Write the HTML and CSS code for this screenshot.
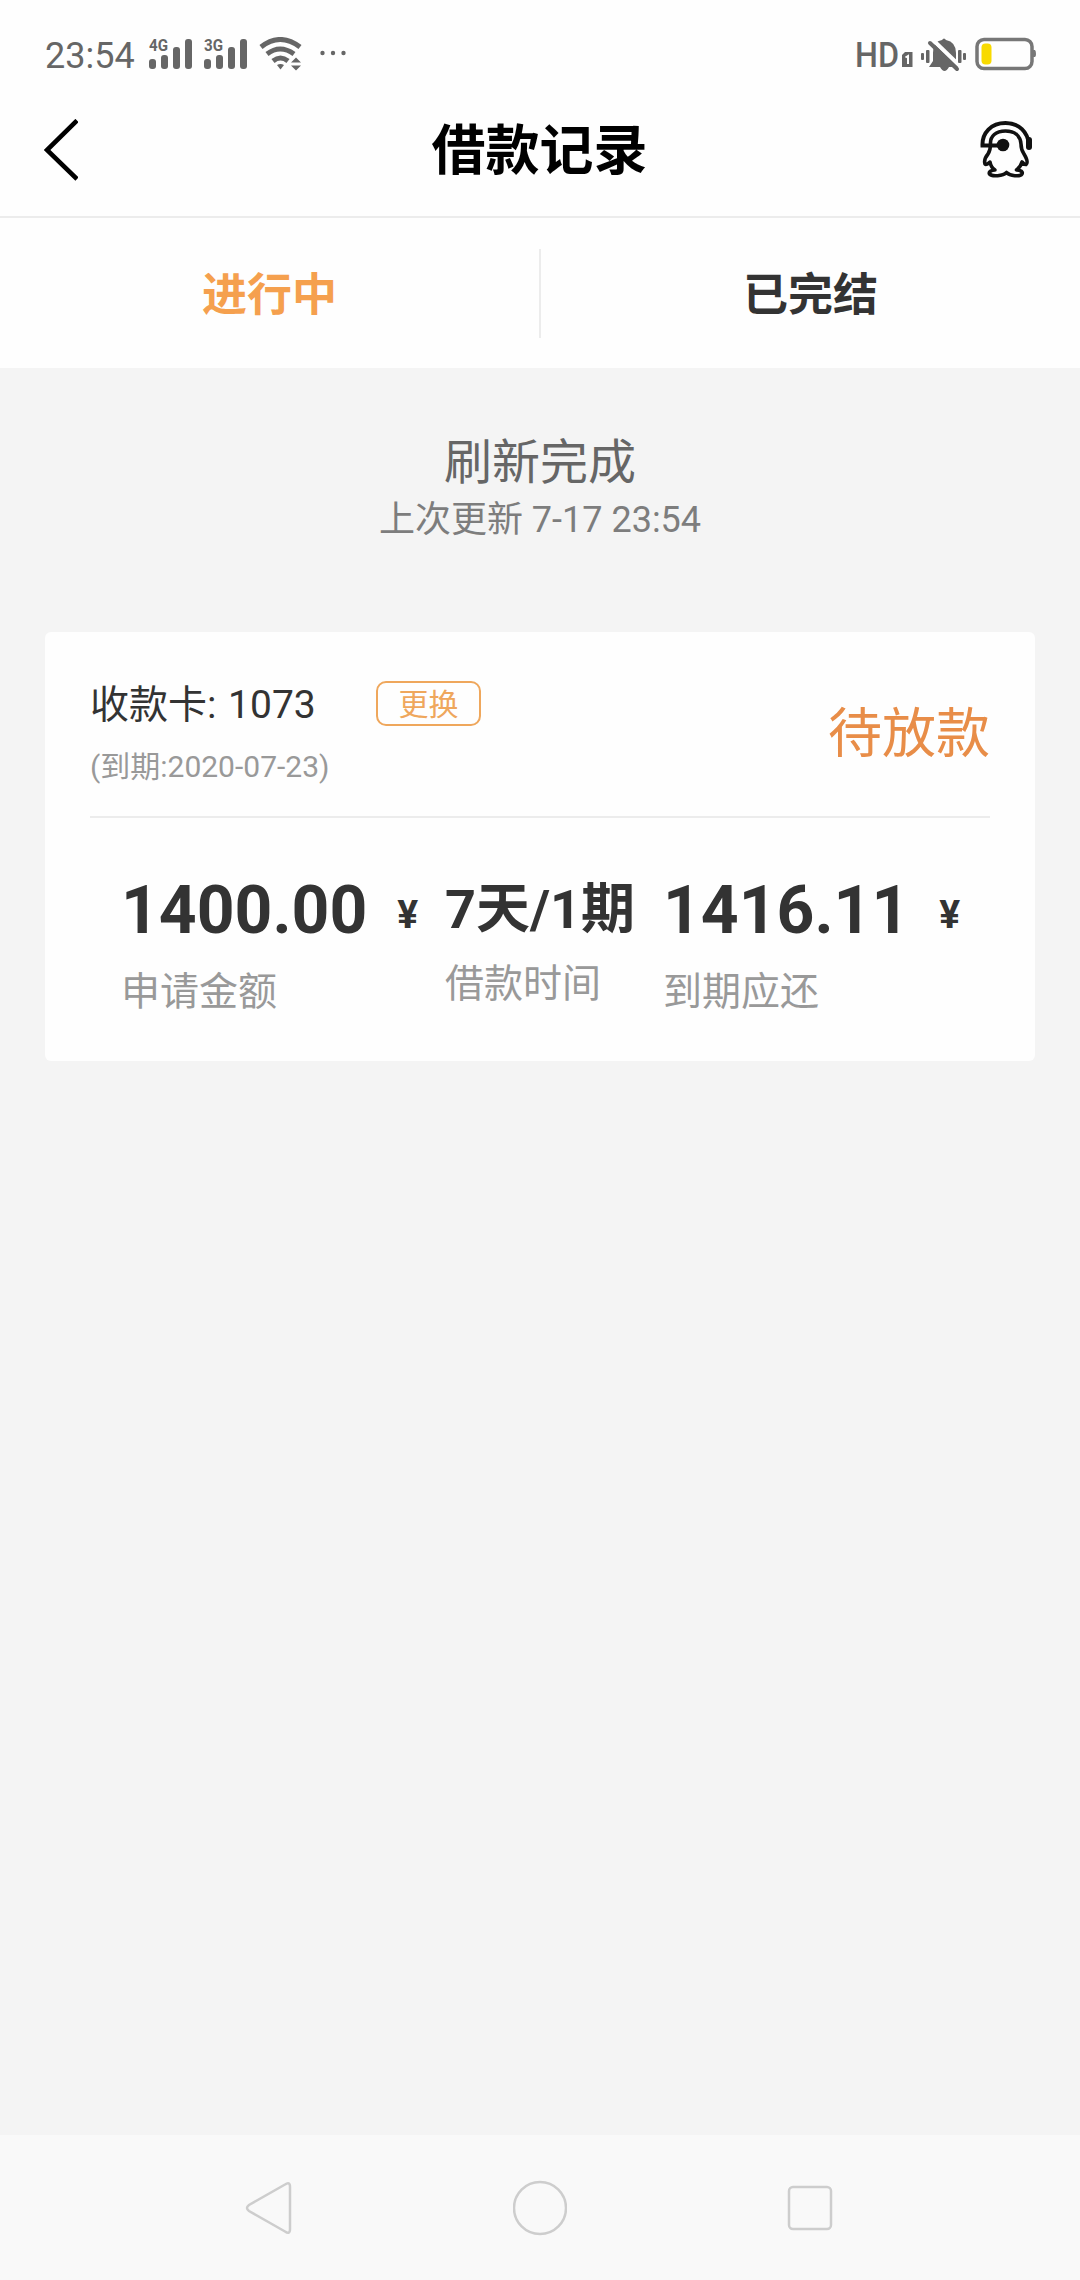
FILE: index.html
```html
<!DOCTYPE html>
<html lang="zh-CN">
<head>
    <meta charset="UTF-8">
    <meta name="viewport" content="width=device-width, initial-scale=1.0">
    <title>借款记录</title>
    <link rel="stylesheet" href="styles.css">
</head>
<body>
    <div class="status-bar">
        <div class="status-left">
            <span class="time">23:54</span>
            <svg class="signal" width="46" height="38" viewBox="0 -4 46 38">
                <text x="1" y="14" textLength="19" lengthAdjust="spacingAndGlyphs">4G</text>
                <rect x="1" y="22" width="7" height="10" rx="3"/>
                <rect x="13" y="18" width="7" height="14" rx="3"/>
                <rect x="25" y="10" width="7" height="22" rx="3"/>
                <rect x="37" y="2" width="7" height="30" rx="3"/>
            </svg>
            <svg class="signal signal-second" width="46" height="38" viewBox="0 -4 46 38">
                <text x="1" y="14" textLength="19" lengthAdjust="spacingAndGlyphs">3G</text>
                <rect x="1" y="22" width="7" height="10" rx="3"/>
                <rect x="13" y="18" width="7" height="14" rx="3"/>
                <rect x="25" y="10" width="7" height="22" rx="3"/>
                <rect x="37" y="2" width="7" height="30" rx="3"/>
            </svg>
            <svg class="wifi" width="44" height="34" viewBox="0 0 44 34">
                <g fill="none" stroke="#666" stroke-width="5">
                    <path d="M2 10Q21 -5 41 10"/>
                    <path d="M8 17Q21 7 35 17"/>
                    <path d="M14 24Q21.500 18 29 24"/>
                </g>
                <path d="M18 28Q21.500 26 25 28L21.500 32.500Z" fill="#666"/>
                <path d="M32 25.500L37 20.500L42 25.500ZM32 28.500L37 33.500L42 28.500Z" fill="#666"/>
            </svg>
            <svg class="more" width="26" height="6" viewBox="0 0 26 6" fill="#666">
                <circle cx="2.500" cy="3" r="2.200"/>
                <circle cx="13" cy="3" r="2.200"/>
                <circle cx="23.500" cy="3" r="2.200"/>
            </svg>
        </div>
        <div class="status-right">
            <svg class="hd" width="60" height="44" viewBox="-2 -6 60 44">
                <text x="-2" y="30" textLength="44" lengthAdjust="spacingAndGlyphs">HD</text>
                <path d="M48 15H55.500V30H45V18Z"/>
                <path d="M48.500 20.500L51 19V27" fill="none" stroke="#fff" stroke-width="2"/>
            </svg>
            <svg class="bell" width="48" height="36" viewBox="0 0 48 36" fill="#666">
                <path d="M9 30L13 24V16Q13 4 22 3Q24 0 26 3Q36 5 36 16V24L39 30H29Q24.500 38 20 30Z"/>
                <path d="M14 4L42 31" stroke="#fefefe" stroke-width="4"/>
                <path d="M10 6L37 32" stroke="#666" stroke-width="4" stroke-linecap="round"/>
                <rect x="1" y="16" width="3" height="7" rx="1"/>
                <rect x="6" y="13" width="3.500" height="13" rx="1"/>
                <rect x="38" y="13" width="3.500" height="13" rx="1"/>
                <rect x="43" y="16" width="3" height="7" rx="1"/>
            </svg>
            <svg class="battery" width="62" height="34" viewBox="0 0 62 34">
                <rect x="2" y="2.500" width="55" height="29" rx="7" fill="none" stroke="#777" stroke-width="3.500"/>
                <path d="M58 13H60Q61 14 61 17T60 20H58Z" fill="#777"/>
                <rect x="6.500" y="6.500" width="10" height="21" rx="4" fill="#f8da00"/>
            </svg>
        </div>
    </div>

    <div class="header">
        <svg class="back" width="34" height="62" viewBox="0 0 34 62">
            <path d="M33 1.500L3 31L33 60" fill="none" stroke="#000" stroke-width="4.600"/>
        </svg>
        <h1>借款记录</h1>
        <svg class="service" width="56" height="60" viewBox="0 0 56 60" fill="none" stroke="#111" stroke-width="4">
            <path d="M21 26.500H3.500C3 14 12 4 26.500 4C40 4 49 13 50 26" />
            <path d="M50 21V28" stroke-width="6" stroke-linecap="round"/>
            <circle cx="24" cy="26" r="6.300" fill="#111" stroke="none"/>
            <path d="M11.500 25C11 17 17 12 26.500 12C36 12 41.500 17 42 25C42 29 43 32 45 35C48 40 49 44 47 45.500C45.500 46 44.500 44 43 43C42 47 40 49 37.500 51C42 51 44 53 43 55C41 58 31 57 27.500 53.500C24 57 13 58 10.500 55C9.500 53 12 51 16 51C13 49 11.500 46 11 43C9 45 7 46 6 45C5 42 6.500 38 9 35C11 32 11.500 29 11.500 25" stroke-width="3.600" stroke-linejoin="round"/>
        </svg>
    </div>

    <div class="tabs">
        <div class="tab active">进行中</div>
        <div class="divider"></div>
        <div class="tab">已完结</div>
    </div>

    <div class="content">
        <div class="refresh">
            <div class="refresh-title">刷新完成</div>
            <div class="refresh-time">上次更新 7-17 23:54</div>
        </div>

        <div class="card">
            <div class="card-head">
                <div class="card-info">
                    <div class="card-row">
                        <span class="card-number">收款卡: 1073</span>
                        <span class="change">更换</span>
                    </div>
                    <div class="due-date">(到期:2020-07-23)</div>
                </div>
                <div class="loan-status">待放款</div>
            </div>
            <div class="card-body">
                <div class="item item-amount">
                    <div class="value">1400.00<span class="unit">¥</span></div>
                    <div class="label">申请金额</div>
                </div>
                <div class="item item-term">
                    <div class="value term">7天/1期</div>
                    <div class="label">借款时间</div>
                </div>
                <div class="item">
                    <div class="value">1416.11<span class="unit">¥</span></div>
                    <div class="label">到期应还</div>
                </div>
            </div>
        </div>
    </div>

    <div class="nav-bar">
        <svg width="54" height="58" viewBox="0 0 54 58">
            <path d="M42 5.500Q47 2 47 8V50Q47 56 42 52.500L6 32Q2 29 6 26Z"/>
        </svg>
        <svg width="54" height="58" viewBox="0 0 54 58">
            <circle cx="27" cy="29" r="26"/>
        </svg>
        <svg width="54" height="58" viewBox="0 0 54 58">
            <rect x="6" y="8" width="42" height="42" rx="4"/>
        </svg>
    </div>
</body>
</html>
```
FILE: styles.css
```css
* {
    box-sizing: border-box;
}

body {
    font-family: Roboto, "Noto Sans CJK SC", sans-serif;
    margin: 0;
    height: 2280px;
    display: flex;
    flex-direction: column;
    background: #f4f4f4;
    color: #333;
}

svg {
    display: block;
    flex-shrink: 0;
}

/* status bar */
.status-bar {
    height: 75px;
    padding: 0 43px 0 45px;
    display: flex;
    justify-content: space-between;
    background: #fefefe;
    color: #666;
}

.status-left, .status-right {
    display: flex;
    padding-top: 37px;
}

.time {
    width: 103px;
    height: 36px;
    font-size: 36px;
    line-height: 38px;
}

.signal text {
    font-size: 17px;
    font-weight: bold;
}

.signal, .hd {
    fill: #666;
}

.signal {
    margin-top: -4px;
}

.signal-second {
    margin-left: 9px;
}

.wifi {
    margin-left: 10px;
}

.more {
    margin: 13px 0 0 17px;
}

.hd {
    margin-top: -6px;
}

.hd text {
    font-size: 35px;
    font-weight: 500;
}

.bell {
    margin-left: 5px;
}

.battery {
    margin-left: 7px;
}

/* header */
.header {
    height: 143px;
    padding: 0 45px 0 44px;
    display: flex;
    justify-content: space-between;
    align-items: center;
    background: #fefefe;
    border-bottom: 2px solid #ececec;
}

.back {
    margin: 8px 22px 0 0;
}

h1 {
    margin: 13px 0 0;
    font-size: 54px;
    line-height: 54px;
    font-weight: bold;
    color: #000;
}

.service {
    margin-top: 6px;
}

/* tabs */
.tabs {
    height: 150px;
    display: flex;
    align-items: center;
    background: #fefefe;
}

.tab {
    flex: 1;
    padding-top: 4px;
    text-align: center;
    font-size: 45px;
    line-height: 45px;
    font-weight: bold;
}

.tab.active {
    color: #f5a04e;
}

.divider {
    width: 2px;
    height: 89px;
    background: #ececec;
}

/* list */
.content {
    flex: 1;
    padding: 71px 45px 0;
}

.refresh {
    height: 193px;
    text-align: center;
}

.refresh-title {
    height: 63px;
    font-size: 48px;
    line-height: 48px;
    color: #666;
}

.refresh-time {
    font-size: 36px;
    line-height: 36px;
    color: #7d7d7d;
}

.card {
    height: 429px;
    padding: 0 45px;
    background: #fefefe;
    border-radius: 6px;
}

.card-head {
    height: 186px;
    display: flex;
    justify-content: space-between;
    border-bottom: 2px solid #ececec;
}

.card-info {
    padding-top: 54px;
}

.card-row {
    height: 66px;
    display: flex;
    align-items: flex-start;
}

.card-number {
    width: 286px;
    font-size: 39px;
    line-height: 39px;
    word-spacing: 2px;
}

.change {
    width: 105px;
    height: 45px;
    margin-top: -5px;
    border: 2px solid #efa75c;
    border-radius: 10px;
    text-align: center;
    font-size: 30px;
    line-height: 43px;
    color: #efa75c;
}

.due-date {
    font-size: 30px;
    line-height: 30px;
    color: #999;
}

.loan-status {
    padding-top: 76px;
    font-size: 54px;
    line-height: 54px;
    color: #e88d48;
}

.card-body {
    padding: 60px 0 0 31px;
    display: flex;
}

.item-amount {
    width: 324px;
}

.item-term {
    width: 218px;
}

.value {
    height: 95px;
    display: flex;
    font-size: 66px;
    line-height: 66px;
    font-weight: bold;
    white-space: nowrap;
}

.unit {
    margin-left: 30px;
    font-size: 39px;
    line-height: 75px;
}

.term {
    height: 87px;
    font-size: 54px;
    line-height: 64px;
}

.label {
    font-size: 39px;
    line-height: 39px;
    color: #999;
}

/* system navigation */
.nav-bar {
    height: 145px;
    padding: 44px 243px 0;
    display: flex;
    justify-content: space-between;
    background: #f9f9f9;
}

.nav-bar svg {
    fill: none;
    stroke: #cdcdcd;
    stroke-width: 2.5;
}
```
